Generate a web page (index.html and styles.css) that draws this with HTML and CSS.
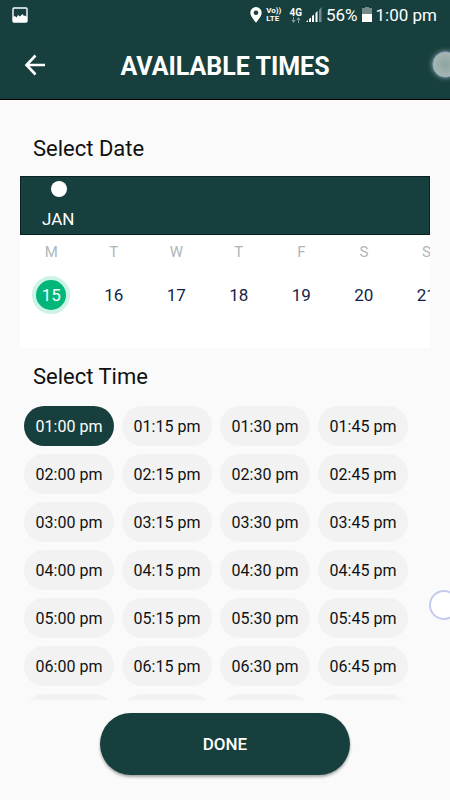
FILE: index.html
```html
<!DOCTYPE html>
<html lang="en">
<head>
  <meta charset="UTF-8">
  <meta name="viewport" content="width=device-width, initial-scale=1">
  <title>Available Times</title>
  <link rel="stylesheet" href="styles.css">
</head>
<body>

<header>
  <div class="status-bar">
    <svg class="status-photo" width="16" height="16" viewBox="0 0 16 16">
      <rect x="1" y="1" width="14" height="14" rx="1" fill="none" stroke="#fff" stroke-width="1.4"/>
      <path d="M1 10 L3 9 L4.5 10.5 L6 8 L8 9.5 L10.5 7 L12 9 L13 8.5 L15 10 V15 H1 Z" fill="#fff"/>
    </svg>
    <svg width="12" height="16" viewBox="0 0 12 16">
      <path fill="#fff" fill-rule="evenodd" d="M6 0 A5.7 5.7 0 0 0 .3 5.7 C.3 9.5 6 15.6 6 15.6 S11.7 9.5 11.7 5.7 A5.7 5.7 0 0 0 6 0 Z M6 3.4 A2.3 2.3 0 1 1 6 8 A2.3 2.3 0 1 1 6 3.4 Z"/>
    </svg>
    <span class="volte"><span>Vo))</span><span>LTE</span></span>
    <span class="network">
      <span>4G</span>
      <svg width="10" height="6" viewBox="0 0 10 6">
        <path d="M2.5 0 V4 M7.5 6 V2" stroke="#8a9f9d" stroke-width="1"/>
        <path d="M.5 3 H4.5 L2.5 6 Z M5.5 3 H9.5 L7.5 0 Z" fill="#8a9f9d"/>
      </svg>
    </span>
    <svg width="16" height="16" viewBox="0 0 16 16">
      <path d="M0 15 L2 13 V15 Z M3 12 L5 10.5 V15 H3 Z M6 9 L8 7.5 V15 H6 Z M9.5 6 L11.5 4 V15 H9.5 Z" fill="#fff"/>
      <path d="M13 3 L15.5 0 V15 H13 Z" fill="#748b89"/>
    </svg>
    <span class="percent">56%</span>
    <svg width="10" height="16" viewBox="0 0 10 16">
      <path d="M3 0 H7 V1 H10 V8 H0 V1 H3 Z" fill="#748b89"/>
      <rect y="7" width="10" height="8" fill="#fff"/>
    </svg>
    <span class="clock">1:00 pm</span>
  </div>

  <div class="app-bar">
    <button class="back-btn" aria-label="Back">
      <svg width="22" height="22" viewBox="0 0 22 22" fill="none" stroke="#fff" stroke-width="2.6">
        <path d="M21 11 H2.5 M11.5 1.5 L2.5 11 L11.5 20.5"/>
      </svg>
    </button>
    <h1>AVAILABLE TIMES</h1>
  </div>
</header>

<main>
  <h2>Select Date</h2>
  <section class="calendar">
    <div class="month">
      <span class="dot"></span>
      <span>JAN</span>
    </div>
    <div class="days">
      <div class="day"><span>M</span><button class="date active">15</button></div>
      <div class="day"><span>T</span><button class="date">16</button></div>
      <div class="day"><span>W</span><button class="date">17</button></div>
      <div class="day"><span>T</span><button class="date">18</button></div>
      <div class="day"><span>F</span><button class="date">19</button></div>
      <div class="day"><span>S</span><button class="date">20</button></div>
      <div class="day"><span>S</span><button class="date">21</button></div>
    </div>
  </section>

  <h2>Select Time</h2>
  <section class="times">
    <button class="time active">01:00 pm</button>
    <button class="time">01:15 pm</button>
    <button class="time">01:30 pm</button>
    <button class="time">01:45 pm</button>
    <button class="time">02:00 pm</button>
    <button class="time">02:15 pm</button>
    <button class="time">02:30 pm</button>
    <button class="time">02:45 pm</button>
    <button class="time">03:00 pm</button>
    <button class="time">03:15 pm</button>
    <button class="time">03:30 pm</button>
    <button class="time">03:45 pm</button>
    <button class="time">04:00 pm</button>
    <button class="time">04:15 pm</button>
    <button class="time">04:30 pm</button>
    <button class="time">04:45 pm</button>
    <button class="time">05:00 pm</button>
    <button class="time">05:15 pm</button>
    <button class="time">05:30 pm</button>
    <button class="time">05:45 pm</button>
    <button class="time">06:00 pm</button>
    <button class="time">06:15 pm</button>
    <button class="time">06:30 pm</button>
    <button class="time">06:45 pm</button>
    <button class="time" aria-label="07:00 pm"></button>
    <button class="time" aria-label="07:15 pm"></button>
    <button class="time" aria-label="07:30 pm"></button>
    <button class="time" aria-label="07:45 pm"></button>
  </section>
</main>

<footer>
  <button class="done-btn">DONE</button>
</footer>

<!-- Floating touch bubbles -->
<div class="bubble bubble-top"></div>
<div class="bubble bubble-bottom"></div>

</body>
</html>
```
FILE: styles.css
```css
* { margin: 0; padding: 0; box-sizing: border-box; }

body {
  font-family: Roboto, sans-serif;
  background: #fafafa;
  color: #111;
  display: flex;
  flex-direction: column;
  height: 100vh;
  position: relative;
  overflow: hidden;
}

button {
  font-family: inherit;
  border: none;
  cursor: pointer;
}

header {
  background: #173f3d;
  color: white;
  border-bottom: 1px solid #000;
}

.status-bar {
  display: flex;
  align-items: center;
  height: 30px;
  padding: 0 13px 0 12px;
  gap: 4px;
}

.status-photo {
  margin-right: auto;
}

.volte {
  display: flex;
  flex-direction: column;
  font-size: 8px;
  line-height: 8px;
  font-weight: bold;
}

.network {
  display: flex;
  flex-direction: column;
  align-items: center;
  font-size: 10px;
  line-height: 9px;
  font-weight: bold;
  margin-left: 4px;
}

.percent, .clock {
  font-size: 17px;
  line-height: 24px;
}

.app-bar {
  display: grid;
  grid-template-columns: 70px 1fr 70px;
  align-items: center;
  height: 69px;
}

.back-btn {
  background: none;
  display: flex;
  justify-content: center;
  padding: 10px;
}

h1 {
  font-size: 25px;
  line-height: 28px;
  font-weight: bold;
  text-align: center;
  white-space: nowrap;
  padding-top: 4px;
}

main {
  flex: 1;
  min-height: 0;
  display: flex;
  flex-direction: column;
  padding: 36px 20px 0;
}

h2 {
  font-size: 22px;
  line-height: 26px;
  font-weight: normal;
  padding-left: 13px;
}

.calendar {
  background: white;
  margin: 14px 0 16px;
  overflow: hidden;
  flex-shrink: 0;
}

.month {
  background: #173f3d;
  color: white;
  border: 1px solid #0a2221;
  display: flex;
  flex-direction: column;
  align-items: flex-start;
  gap: 12px;
  font-size: 17px;
  line-height: 20px;
  padding: 4px 21px 5px;
}

.dot {
  width: 16px;
  height: 16px;
  border-radius: 50%;
  background: white;
  margin-left: 9px;
}

.days {
  display: flex;
  padding: 7px 0 34px;
}

.day {
  flex: 0 0 15.25%;
  display: flex;
  flex-direction: column;
  align-items: center;
  gap: 14px;
  font-size: 15px;
  line-height: 20px;
  color: #adb7bc;
}

.date {
  width: 38px;
  height: 38px;
  border-radius: 50%;
  border: 4px solid transparent;
  background: none;
  font-size: 17px;
  color: #151f4a;
}

.date.active {
  background: #00b67a;
  border-color: #ccf3e4;
  color: white;
}

.times {
  display: grid;
  grid-template-columns: repeat(4, 1fr);
  grid-auto-rows: 40px;
  gap: 8px;
  padding: 16px 22px 0 4px;
  overflow: hidden;
}

.time {
  background: #f2f2f2;
  color: #111;
  font-size: 16px;
  border-radius: 20px;
  white-space: nowrap;
}

.time.active {
  background: #173f3d;
  color: white;
}

footer {
  display: flex;
  justify-content: center;
  padding: 13px 100px 25px;
}

.done-btn {
  flex: 1;
  height: 62px;
  border-radius: 31px;
  background: #173f3d;
  color: white;
  font-size: 17px;
  font-weight: 500;
  box-shadow: 0 2px 3px rgba(0, 0, 0, 0.35);
}

.bubble {
  position: absolute;
  border-radius: 50%;
}

.bubble-top {
  top: 51px;
  right: -9px;
  width: 27px;
  height: 27px;
  background: radial-gradient(#8da4a1, #b0bfbd);
  border: 1px solid #7b91ac;
  box-shadow: 0 0 5px rgba(200, 220, 220, 0.6);
}

.bubble-bottom {
  top: 590px;
  right: -9px;
  width: 30px;
  height: 30px;
  background: white;
  border: 2px solid #c5cbec;
}
```
